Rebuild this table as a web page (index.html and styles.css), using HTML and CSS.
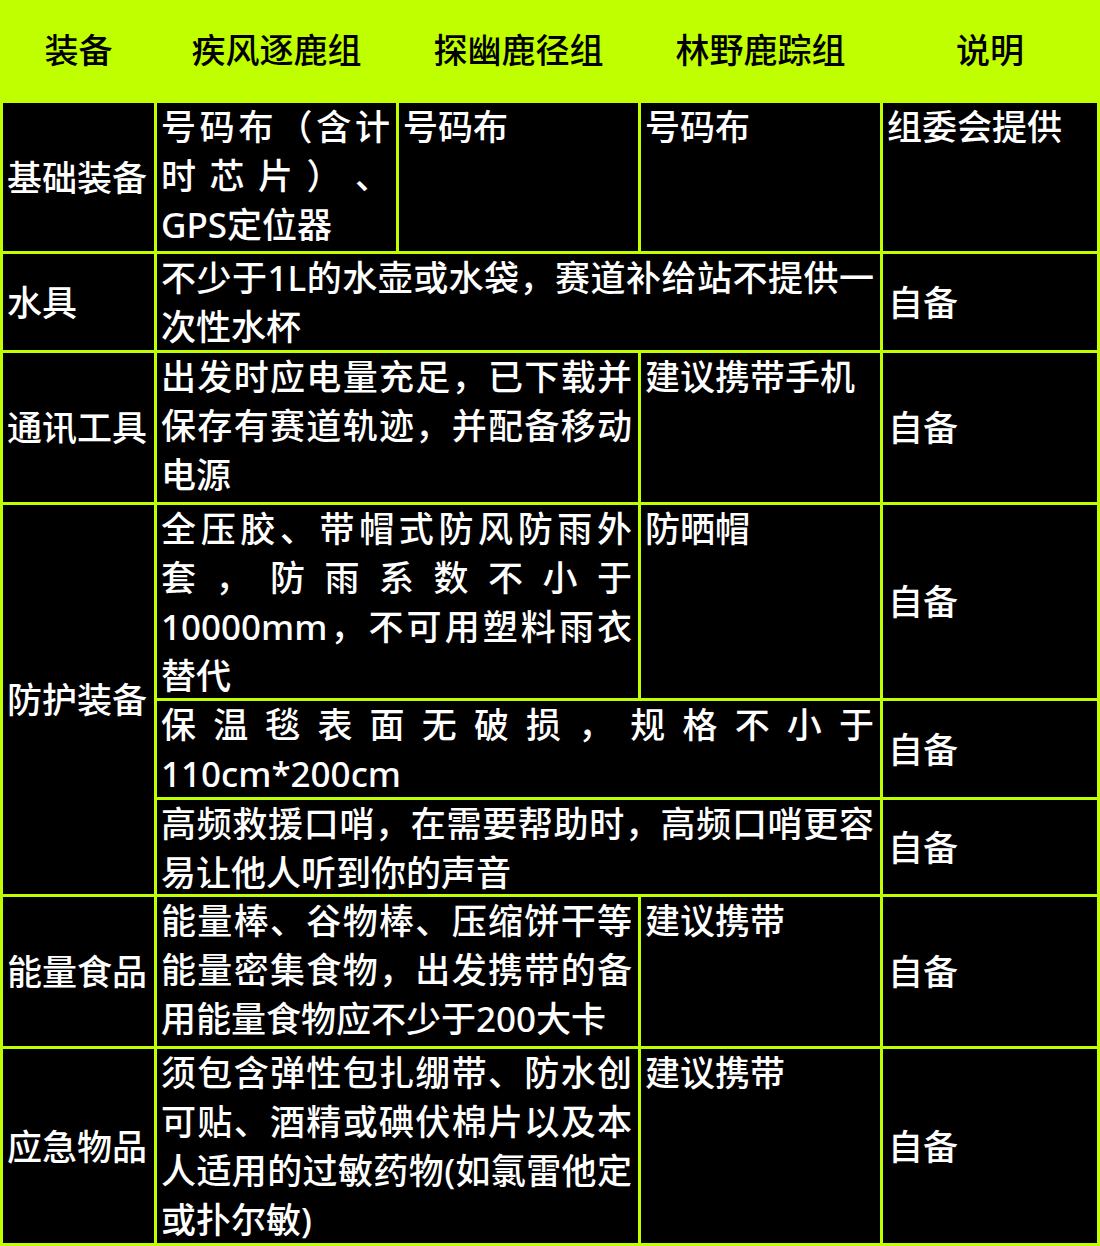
FILE: index.html
```html
<!DOCTYPE html>
<html lang="zh-CN">
<head>
<meta charset="utf-8">
<title>装备表</title>
<link rel="stylesheet" href="styles.css">
</head>
<body>
<div class="table">
  <div class="th">装备</div>
  <div class="th">疾风逐鹿组</div>
  <div class="th">探幽鹿径组</div>
  <div class="th">林野鹿踪组</div>
  <div class="th">说明</div>

  <div class="td label">基础装备</div>
  <div class="td"><div class="t">号码布（含计时芯片）、GPS定位器</div></div>
  <div class="td"><div class="t">号码布</div></div>
  <div class="td"><div class="t">号码布</div></div>
  <div class="td"><div class="t">组委会提供</div></div>

  <div class="td label">水具</div>
  <div class="td span3"><div class="t">不少于1L的水壶或水袋，赛道补给站不提供一次性水杯</div></div>
  <div class="td note">自备</div>

  <div class="td label">通讯工具</div>
  <div class="td span2"><div class="t">出发时应电量充足，已下载并保存有赛道轨迹，并配备移动电源</div></div>
  <div class="td"><div class="t">建议携带手机</div></div>
  <div class="td note">自备</div>

  <div class="td label tall3">防护装备</div>
  <div class="td span2"><div class="t">全压胶、带帽式防风防雨外套，防雨系数不小于10000mm，不可用塑料雨衣替代</div></div>
  <div class="td"><div class="t">防晒帽</div></div>
  <div class="td note">自备</div>
  <div class="td span3"><div class="t">保温毯表面无破损，规格不小于110cm*200cm</div></div>
  <div class="td note">自备</div>
  <div class="td span3"><div class="t">高频救援口哨，在需要帮助时，高频口哨更容易让他人听到你的声音</div></div>
  <div class="td note">自备</div>

  <div class="td label">能量食品</div>
  <div class="td span2"><div class="t">能量棒、谷物棒、压缩饼干等能量密集食物，出发携带的备用能量食物应不少于200大卡</div></div>
  <div class="td"><div class="t">建议携带</div></div>
  <div class="td note">自备</div>

  <div class="td label">应急物品</div>
  <div class="td span2"><div class="t">须包含弹性包扎绷带、防水创可贴、酒精或碘伏棉片以及本人适用的过敏药物(如氯雷他定或扑尔敏)</div></div>
  <div class="td"><div class="t">建议携带</div></div>
  <div class="td note">自备</div>
</div>
</body>
</html>
```
FILE: styles.css
```css
html, body {
  margin: 0;
  padding: 0;
  background: #000;
}
body {
  width: 1100px;
  height: 1246px;
  overflow: hidden;
  font-family: "Noto Sans", "Noto Sans CJK SC", sans-serif;
}
.table {
  display: grid;
  grid-template-columns: 151px 239px 239px 239px 214px;
  grid-template-rows: 100px 148px 96px 149px 193px 96px 94px 149px 194px;
  gap: 3px;
  padding: 0 3px 3px 3px;
  background: #c0ff00;
  width: 1094px;
}
.th {
  background: #c0ff00;
  color: #000;
  font-size: 34px;
  font-weight: 500;
  display: flex;
  align-items: center;
  justify-content: center;
  padding-bottom: 4px;
}
.td {
  background: #000;
  color: #fff;
  font-size: 35px;
  font-weight: 500;
  line-height: 49px;
  padding: 0 6px 0 4px;
  text-align: justify;
  text-justify: inter-character;
  text-spacing-trim: space-all;
  overflow: hidden;
}
.t {
  margin-top: -1px;
}
.label {
  display: flex;
  align-items: center;
  padding: 0 4px;
  white-space: nowrap;
}
.note {
  display: flex;
  align-items: center;
  padding: 0 5px;
}
.span2 { grid-column: span 2; }
.span3 { grid-column: span 3; }
.tall3 { grid-row: span 3; }
```
